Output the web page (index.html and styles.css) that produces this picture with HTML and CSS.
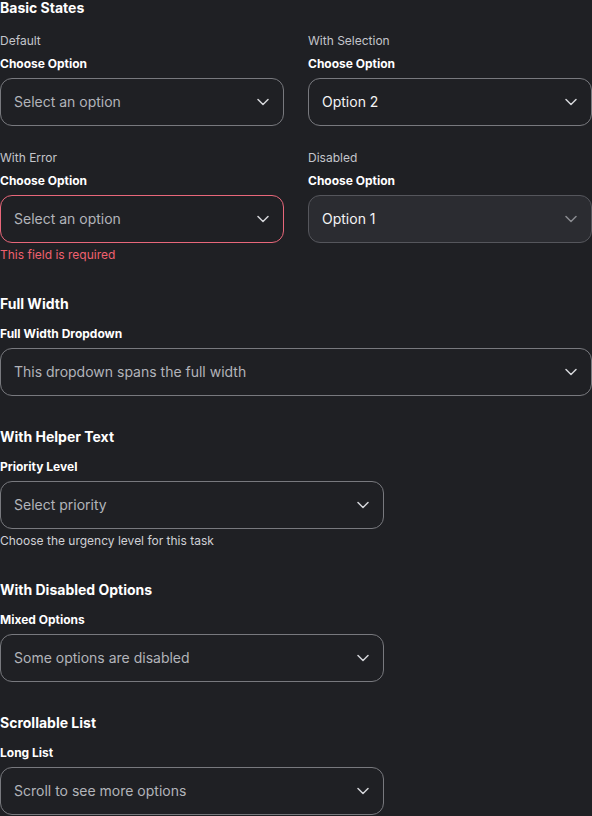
FILE: index.html
```html
<!DOCTYPE html>
<html>
<head>
<meta charset="utf-8">
<link rel="stylesheet" href="styles.css">
</head>
<body>
<main class="page">
  <section class="section">
    <h2 class="section-title first">Basic States</h2>
    <div class="grid">
      <div class="field">
        <div class="caption">Default</div>
        <div class="label">Choose Option</div>
        <div class="select"><span class="value placeholder">Select an option</span><svg class="chev" viewBox="0 0 12 8"><path d="M1 1.5 6 6.5 11 1.5"/></svg></div>
      </div>
      <div class="field">
        <div class="caption">With Selection</div>
        <div class="label">Choose Option</div>
        <div class="select"><span class="value">Option 2</span><svg class="chev" viewBox="0 0 12 8"><path d="M1 1.5 6 6.5 11 1.5"/></svg></div>
      </div>
      <div class="field">
        <div class="caption">With Error</div>
        <div class="label">Choose Option</div>
        <div class="select error"><span class="value placeholder">Select an option</span><svg class="chev" viewBox="0 0 12 8"><path d="M1 1.5 6 6.5 11 1.5"/></svg></div>
        <div class="error-text">This field is required</div>
      </div>
      <div class="field">
        <div class="caption">Disabled</div>
        <div class="label">Choose Option</div>
        <div class="select disabled"><span class="value">Option 1</span><svg class="chev" viewBox="0 0 12 8"><path d="M1 1.5 6 6.5 11 1.5"/></svg></div>
      </div>
    </div>
  </section>

  <section class="section">
    <h2 class="section-title">Full Width</h2>
    <div class="label">Full Width Dropdown</div>
    <div class="select"><span class="value placeholder">This dropdown spans the full width</span><svg class="chev" viewBox="0 0 12 8"><path d="M1 1.5 6 6.5 11 1.5"/></svg></div>
  </section>

  <section class="section">
    <h2 class="section-title">With Helper Text</h2>
    <div class="label">Priority Level</div>
    <div class="select narrow"><span class="value placeholder">Select priority</span><svg class="chev" viewBox="0 0 12 8"><path d="M1 1.5 6 6.5 11 1.5"/></svg></div>
    <div class="helper">Choose the urgency level for this task</div>
  </section>

  <section class="section">
    <h2 class="section-title">With Disabled Options</h2>
    <div class="label">Mixed Options</div>
    <div class="select narrow"><span class="value placeholder">Some options are disabled</span><svg class="chev" viewBox="0 0 12 8"><path d="M1 1.5 6 6.5 11 1.5"/></svg></div>
  </section>

  <section class="section">
    <h2 class="section-title">Scrollable List</h2>
    <div class="label">Long List</div>
    <div class="select narrow"><span class="value placeholder">Scroll to see more options</span><svg class="chev" viewBox="0 0 12 8"><path d="M1 1.5 6 6.5 11 1.5"/></svg></div>
  </section>
</main>
</body>
</html>
```

FILE: styles.css
```css
html, body {
  margin: 0;
  padding: 0;
  background: #1f2024;
}
body {
  font-family: Inter, "Noto Sans", sans-serif;
  color: #e8e8ea;
}
.page {
  display: flex;
  flex-direction: column;
  gap: 33px;
}
.section {
  display: flex;
  flex-direction: column;
}
.section-title {
  margin: 0 0 14px;
  font-size: 14px;
  line-height: 16px;
  font-weight: 700;
  color: #ffffff;
}
.section-title.first {
  margin-bottom: 17px;
}
.grid {
  display: grid;
  grid-template-columns: 1fr 1fr;
  column-gap: 24px;
  row-gap: 24px;
}
.field {
  display: flex;
  flex-direction: column;
}
.caption {
  font-size: 12px;
  line-height: 16px;
  color: #c4c5cb;
  margin-bottom: 7px;
}
.label {
  font-size: 12px;
  line-height: 16px;
  font-weight: 700;
  color: #ffffff;
  margin-bottom: 6px;
}
.select {
  box-sizing: border-box;
  height: 48px;
  border: 1px solid #78797e;
  border-radius: 12px;
  display: flex;
  align-items: center;
  justify-content: space-between;
  padding: 0 14px 0 13px;
}
.select.narrow {
  width: 384px;
}
.select.error {
  border-color: #e8677a;
}
.select.disabled {
  background: #2b2c31;
  border-color: #55565c;
}
.value {
  font-size: 14px;
  line-height: 20px;
  color: #f4f4f5;
}
.value.placeholder {
  color: #b2b4ba;
}
.chev {
  width: 12px;
  height: 8px;
  fill: none;
  stroke: #d4d5d9;
  stroke-width: 1.5;
  stroke-linecap: round;
  stroke-linejoin: round;
}
.disabled .chev {
  stroke: #8a8b90;
}
.error-text {
  margin-top: 4px;
  font-size: 12px;
  line-height: 16px;
  color: #f0606f;
}
.helper {
  margin-top: 4px;
  font-size: 12px;
  line-height: 16px;
  color: #d0d1d6;
}
```
